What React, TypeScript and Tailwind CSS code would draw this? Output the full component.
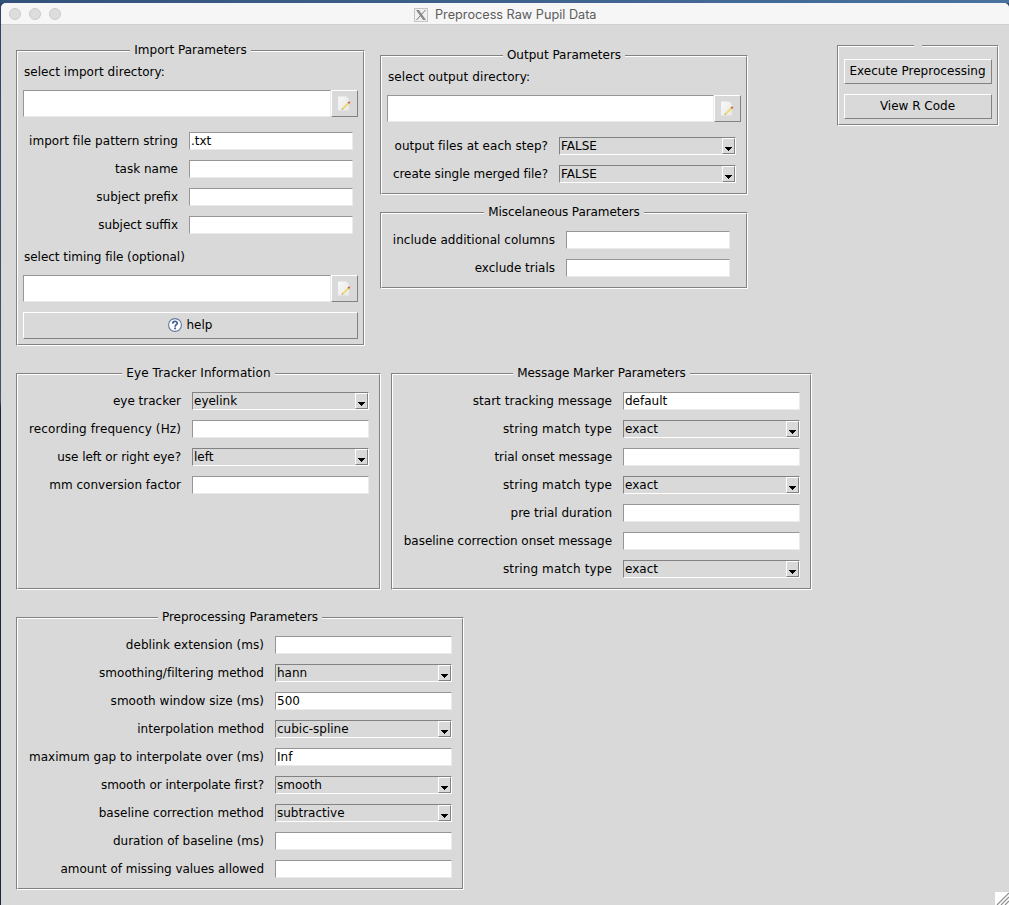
import type { ReactNode } from "react";

type Field = { label: string; value?: string; combo?: boolean; tracking?: string };

const importFields: Field[] = [
  { label: "import file pattern string", value: ".txt", tracking: "tracking-[0.04px]" },
  { label: "task name" },
  { label: "subject prefix" },
  { label: "subject suffix" },
];
const outputFields: Field[] = [
  { label: "output files at each step?", value: "FALSE", combo: true, tracking: "tracking-[0.03px]" },
  { label: "create single merged file?", value: "FALSE", combo: true, tracking: "tracking-[-0.04px]" },
];
const miscFields: Field[] = [
  { label: "include additional columns", tracking: "tracking-[0.04px]" },
  { label: "exclude trials" },
];
const eyeFields: Field[] = [
  { label: "eye tracker", value: "eyelink", combo: true },
  { label: "recording frequency (Hz)", tracking: "tracking-[0.11px]" },
  { label: "use left or right eye?", value: "left", combo: true, tracking: "tracking-[-0.04px]" },
  { label: "mm conversion factor" },
];
const messageFields: Field[] = [
  { label: "start tracking message", value: "default", tracking: "tracking-[0.03px]" },
  { label: "string match type", value: "exact", combo: true, tracking: "tracking-[0.13px]" },
  { label: "trial onset message", tracking: "tracking-[-0.05px]" },
  { label: "string match type", value: "exact", combo: true, tracking: "tracking-[0.13px]" },
  { label: "pre trial duration" },
  { label: "baseline correction onset message", tracking: "tracking-[-0.03px]" },
  { label: "string match type", value: "exact", combo: true, tracking: "tracking-[0.13px]" },
];
const preprocessFields: Field[] = [
  { label: "deblink extension (ms)", tracking: "tracking-[0.04px]" },
  { label: "smoothing/filtering method", value: "hann", combo: true, tracking: "tracking-[0.03px]" },
  { label: "smooth window size (ms)", value: "500", tracking: "tracking-[0.04px]" },
  { label: "interpolation method", value: "cubic-spline", combo: true },
  { label: "maximum gap to interpolate over (ms)", value: "Inf", tracking: "tracking-[0.03px]" },
  { label: "smooth or interpolate first?", value: "smooth", combo: true, tracking: "tracking-[-0.04px]" },
  { label: "baseline correction method", value: "subtractive", combo: true, tracking: "tracking-[0.03px]" },
  { label: "duration of baseline (ms)" },
  { label: "amount of missing values allowed", tracking: "tracking-[-0.03px]" },
];

function Frame({ title, className, children }: { title?: string; className: string; children: ReactNode }) {
  return (
    <section className={`flex shrink-0 border border-t-[#828282] border-l-[#828282] border-r-white border-b-white ${className}`}>
      <div className="flex min-w-0 flex-1 flex-col border border-t-white border-l-white border-r-[#828282] border-b-[#828282]">
        <h2 className="-mt-[10px] -mb-[6px] h-4 self-center bg-[#d9d9d9] px-1 leading-4">{title}</h2>
        {children}
      </div>
    </section>
  );
}

function Fields({ items, labelWidth, fieldWidth, className }: { items: Field[]; labelWidth: string; fieldWidth: string; className: string }) {
  return (
    <div className={`flex flex-col gap-[10px] ${className}`}>
      {items.map((f, i) => (
        <div key={i} className="flex h-[18px] items-center">
          <span className={`mr-[11px] text-right leading-[18px] whitespace-nowrap ${labelWidth} ${f.tracking ?? ""}`}>{f.label}</span>
          {f.combo ? (
            <div className={`flex h-[18px] justify-between border border-t-[#828282] border-l-[#828282] border-r-white border-b-white pl-px leading-4 ${fieldWidth}`}>
              <span>{f.value}</span>
              <span className="flex h-4 w-[13px] items-end justify-center border border-t-white border-l-white border-r-[#828282] border-b-[#828282] pb-[2px]">
                <svg width="7" height="4" viewBox="0 0 7 4" shapeRendering="crispEdges">
                  <path d="M0 0h7v1h-1v1h-1v1h-1v1h-1v-1h-1v-1h-1v-1h-1z" />
                </svg>
              </span>
            </div>
          ) : (
            <div className={`h-[18px] border border-t-[#969696] border-l-[#969696] border-r-[#ebebeb] border-b-[#ebebeb] bg-white pl-px leading-4 ${fieldWidth}`}>
              {f.value}
            </div>
          )}
        </div>
      ))}
    </div>
  );
}

function Raised({ className, children }: { className: string; children: ReactNode }) {
  return (
    <button className={`flex items-center justify-center border border-t-white border-l-white border-r-[#828282] border-b-[#828282] pr-px pb-[2px] ${className}`}>
      {children}
    </button>
  );
}

function PathEntry() {
  return (
    <div className="mx-[5px] mt-[10px] flex h-[27px] shrink-0">
      <div className="flex-1 border border-t-[#969696] border-l-[#969696] border-r-[#ebebeb] border-b-[#ebebeb] bg-white" />
      <Raised className="w-[27px]">
        <svg width="16" height="16" viewBox="0 0 16 16">
          <defs>
            <linearGradient id="paper" x1="0" y1="0" x2="1" y2="1">
              <stop offset="0" stopColor="#f8f8f8" />
              <stop offset="1" stopColor="#e9e9e9" />
            </linearGradient>
          </defs>
          <path d="M2 1.5h8.5l2.5 3v11H2z" fill="url(#paper)" />
          <path d="M10.3 1.5v3.2H13z" fill="#fff" stroke="#dcdcdc" strokeWidth=".5" />
          <path d="M5.4 15l.7-1.8 5.6-5.7 1.4 1.4-5.7 5.4z" fill="#efd967" />
          <path d="M5.4 15l.7-1.8 1.3 1.1z" fill="#b0a27a" />
          <path d="M11.5 7.7l1.4-1.4 1.5 1.3-1.4 1.4z" fill="#d2624f" />
        </svg>
      </Raised>
    </div>
  );
}

export default function App() {
  return (
    <div className="flex h-[905px] w-[1009px] flex-col overflow-hidden bg-linear-to-r from-[#33527a] to-[#49729f] pt-[3px] font-['DejaVu_Sans',sans-serif] text-[12px] text-black">
      <div className="flex flex-1 bg-linear-to-b from-[#2b4468] via-[#46536a] via-[44%] to-[#1b2538] to-[45%] pl-px">
        <main className="flex flex-1 flex-col rounded-t-[5px] bg-[#d9d9d9]">
          <header className="flex h-[22px] items-center rounded-t-[5px] border-b border-[#cfcfcf] bg-[#f6f6f6] pl-2">
            <div className="flex w-[405px] gap-2">
              <i className="size-3 rounded-full border border-[#cacaca] bg-[#dddddd]" />
              <i className="size-3 rounded-full border border-[#cacaca] bg-[#dddddd]" />
              <i className="size-3 rounded-full border border-[#cacaca] bg-[#dddddd]" />
            </div>
            <svg width="14" height="14" viewBox="0 0 14 14" className="mt-[2px]">
              <rect x=".5" y=".5" width="13" height="13" fill="#f1f1f1" stroke="#c4c4c4" />
              <path d="M2 2h3l7 10H9z" fill="#8c8c8c" />
              <path d="M11.5 2L2.5 12" stroke="#777" />
            </svg>
            <h1 className="ml-[7px] pt-[2px] font-['Inter',sans-serif] text-[12.7px] whitespace-nowrap text-[#5c5c5c]">Preprocess Raw Pupil Data</h1>
          </header>

          <div className="flex h-[348px] shrink-0 items-start pl-[15px]">
            <Frame title="Import Parameters" className="mt-[25px] h-[296px] w-[349px]">
              <p className="mt-3 h-4 pl-[6px] leading-4 tracking-[0.05px]">select import directory:</p>
              <PathEntry />
              <Fields items={importFields} labelWidth="w-[160px]" fieldWidth="w-[164px]" className="mt-[15px]" />
              <p className="mt-[15px] h-4 pl-[6px] leading-4 tracking-[-0.03px]">select timing file (optional)</p>
              <PathEntry />
              <Raised className="mx-[5px] mt-[10px] h-[27px] gap-[5px]">
                <svg width="14" height="14" viewBox="0 0 14 14">
                  <circle cx="7" cy="7" r="6.4" fill="#fff" stroke="#62789e" strokeWidth="1.1" />
                  <path d="M4.7 5.6C4.8 2.7 9.4 2.8 9.3 5.3C9.2 6.7 7.1 6.8 7.1 8.7" fill="none" stroke="#3f5f93" strokeWidth="1.7" />
                  <path d="M6.2 9.6h1.8v1.7H6.2z" fill="#3f5f93" />
                </svg>
                help
              </Raised>
            </Frame>

            <div className="mt-[30px] ml-[15px] flex flex-col gap-[17px]">
              <Frame title="Output Parameters" className="h-[140px] w-[368px]">
                <p className="mt-3 h-4 pl-[6px] leading-4 tracking-[0.1px]">select output directory:</p>
                <PathEntry />
                <Fields items={outputFields} labelWidth="w-[166px]" fieldWidth="w-[177px]" className="mt-[15px]" />
              </Frame>
              <Frame title="Miscelaneous Parameters" className="h-[77px] w-[368px] [&_h2]:tracking-[-0.08px]">
                <Fields items={miscFields} labelWidth="w-[173px]" fieldWidth="w-[164px]" className="mt-[17px]" />
              </Frame>
            </div>

            <Frame className="mt-[20px] ml-[89px] h-[81px] w-[162px]">
              <Raised className="mx-[5px] mt-3 h-[25px] whitespace-nowrap tracking-[0.03px]">Execute Preprocessing</Raised>
              <Raised className="mx-[5px] mt-[10px] h-[25px]">View R Code</Raised>
            </Frame>
          </div>

          <div className="flex gap-[10px] pl-[15px]">
            <Frame title="Eye Tracker Information" className="h-[217px] w-[365px] [&_h2]:tracking-[0.08px]">
              <Fields items={eyeFields} labelWidth="w-[163px]" fieldWidth="w-[177px]" className="mt-[17px]" />
            </Frame>
            <Frame title="Message Marker Parameters" className="h-[217px] w-[421px] [&_h2]:tracking-[-0.08px]">
              <Fields items={messageFields} labelWidth="w-[219px]" fieldWidth="w-[177px]" className="mt-[17px]" />
            </Frame>
          </div>

          <div className="mt-[27px] flex flex-1 items-start justify-between pl-[15px]">
            <Frame title="Preprocessing Parameters" className="h-[273px] w-[448px]">
              <Fields items={preprocessFields} labelWidth="w-[246px]" fieldWidth="w-[177px]" className="mt-[17px]" />
            </Frame>
            <svg width="14" height="13" viewBox="0 0 14 13" className="self-end bg-white">
              <path d="M2 13L14 1M6 13L14 5M10 13L14 9" stroke="#8c8c8c" strokeWidth="1.2" />
            </svg>
          </div>
        </main>
      </div>
    </div>
  );
}
